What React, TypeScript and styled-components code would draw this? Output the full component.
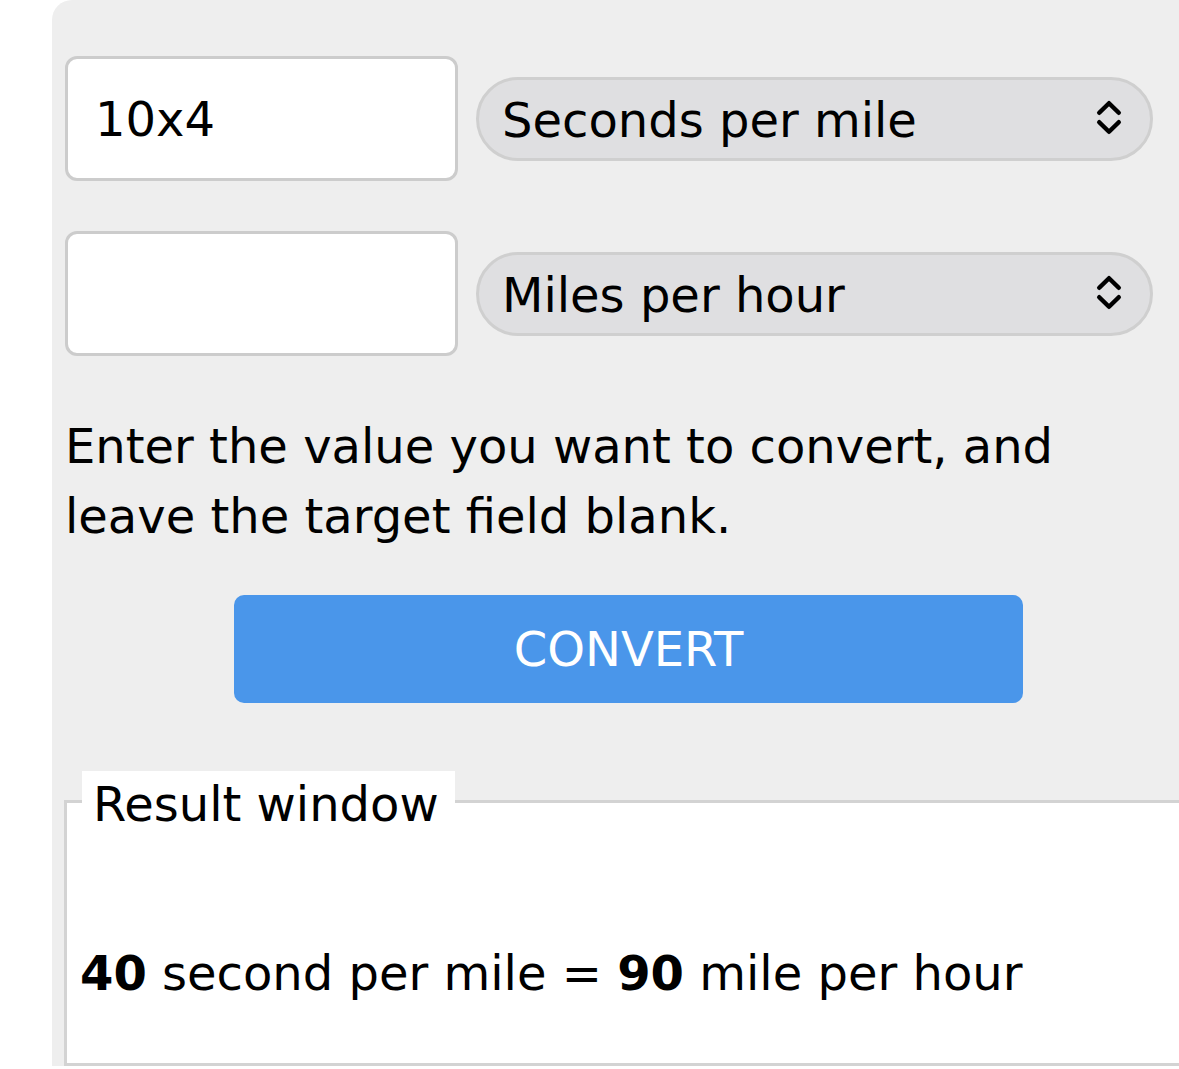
import * as React from 'react';
import styled, { createGlobalStyle } from 'styled-components';

const GlobalStyle = createGlobalStyle`
	html, body {
		margin: 0;
		padding: 0;
		background: #ffffff;
		overflow: hidden;
	}
	body {
		font-family: "DejaVu Sans", Verdana, sans-serif;
		color: #000;
	}
`;

const Page = styled.div`
	padding-left: 52px;
	width: 1153px;
`;

const Panel = styled.div`
	background: #eeeeee;
	border-radius: 20px 20px 0 0;
	padding: 56px 13px 0 13px;
	width: 1127px;
	font-size: 48px;
	line-height: 70px;
`;

const Row = styled.div`
	display: flex;
	align-items: center;
	gap: 18px;
	margin-bottom: 50px;

	&:last-of-type {
		margin-bottom: 0;
	}
`;

const ValueInput = styled.input`
	box-sizing: border-box;
	width: 393px;
	height: 125px;
	border: 3px solid #cccccc;
	border-radius: 12px;
	background: #ffffff;
	padding: 0 0 0 27px;
	font-family: "DejaVu Sans", Verdana, sans-serif;
	font-size: 48px;
	color: #000;
	outline: none;
`;

const SelectWrap = styled.div`
	position: relative;
	width: 677px;
	height: 84px;
`;

const UnitSelect = styled.select`
	appearance: none;
	-webkit-appearance: none;
	box-sizing: border-box;
	width: 100%;
	height: 100%;
	border: 3px solid #cfcfcf;
	border-radius: 42px;
	background: #dfdfe1;
	padding: 3px 0 0 23px;
	font-family: "DejaVu Sans", Verdana, sans-serif;
	font-size: 48px;
	color: #000;
	outline: none;
`;

const Chevron = styled.svg`
	position: absolute;
	right: 31px;
	top: 22px;
	pointer-events: none;
`;

const Hint = styled.p`
	margin: 55px 0 44px;
	font-size: 48px;
	line-height: 70px;
`;

const ConvertButton = styled.button`
	display: block;
	width: 70%;
	height: 108px;
	margin: 0 auto;
	border: none;
	border-radius: 10px;
	background: #4a96ea;
	color: #ffffff;
	font-family: "DejaVu Sans", Verdana, sans-serif;
	font-size: 48px;
	cursor: pointer;
`;

const ResultBox = styled.fieldset`
	margin: 68px 0 0 -1px;
	border: 3px solid #d3d3d3;
	background: #ffffff;
	padding: 0 13px 55px 13px;
	min-width: 0;
`;

const ResultLegend = styled.legend`
	background: #ffffff;
	padding: 6px 16px 0 11px;
	margin-left: 2px;
	line-height: 54px;
`;

const ResultLine = styled.p`
	margin: 107px 0 0;
	line-height: 70px;
`;

const ChevronIcon = () => (
	<Chevron width="26" height="38" viewBox="0 0 26 38" fill="none">
		<path d="M3.25 13.75 L13 4.25 L22.75 13.75" stroke="#000" strokeWidth="4.5" strokeLinecap="round" strokeLinejoin="round" />
		<path d="M3.25 23.25 L13 32.75 L22.75 23.25" stroke="#000" strokeWidth="4.5" strokeLinecap="round" strokeLinejoin="round" />
	</Chevron>
);

interface UnitRowProps {
	value: string;
	unit: string;
	units: string[];
}

const UnitRow = ({ value, unit, units }: UnitRowProps) => (
	<Row>
		<ValueInput type="text" defaultValue={value} />
		<SelectWrap>
			<UnitSelect defaultValue={unit}>
				{units.map(u => (
					<option key={u} value={u}>{u}</option>
				))}
			</UnitSelect>
			<ChevronIcon />
		</SelectWrap>
	</Row>
);

const UNITS = ['Seconds per mile', 'Miles per hour', 'Kilometers per hour', 'Minutes per mile'];

export default function App() {
	return (
		<>
			<GlobalStyle />
			<Page>
				<Panel>
					<UnitRow value="10x4" unit="Seconds per mile" units={UNITS} />
					<UnitRow value="" unit="Miles per hour" units={UNITS} />
					<Hint>Enter the value you want to convert, and leave the target field blank.</Hint>
					<ConvertButton>CONVERT</ConvertButton>
					<ResultBox>
						<ResultLegend>Result window</ResultLegend>
						<ResultLine>
							<b>40</b> second per mile = <b>90</b> mile per hour
						</ResultLine>
					</ResultBox>
				</Panel>
			</Page>
		</>
	);
}
